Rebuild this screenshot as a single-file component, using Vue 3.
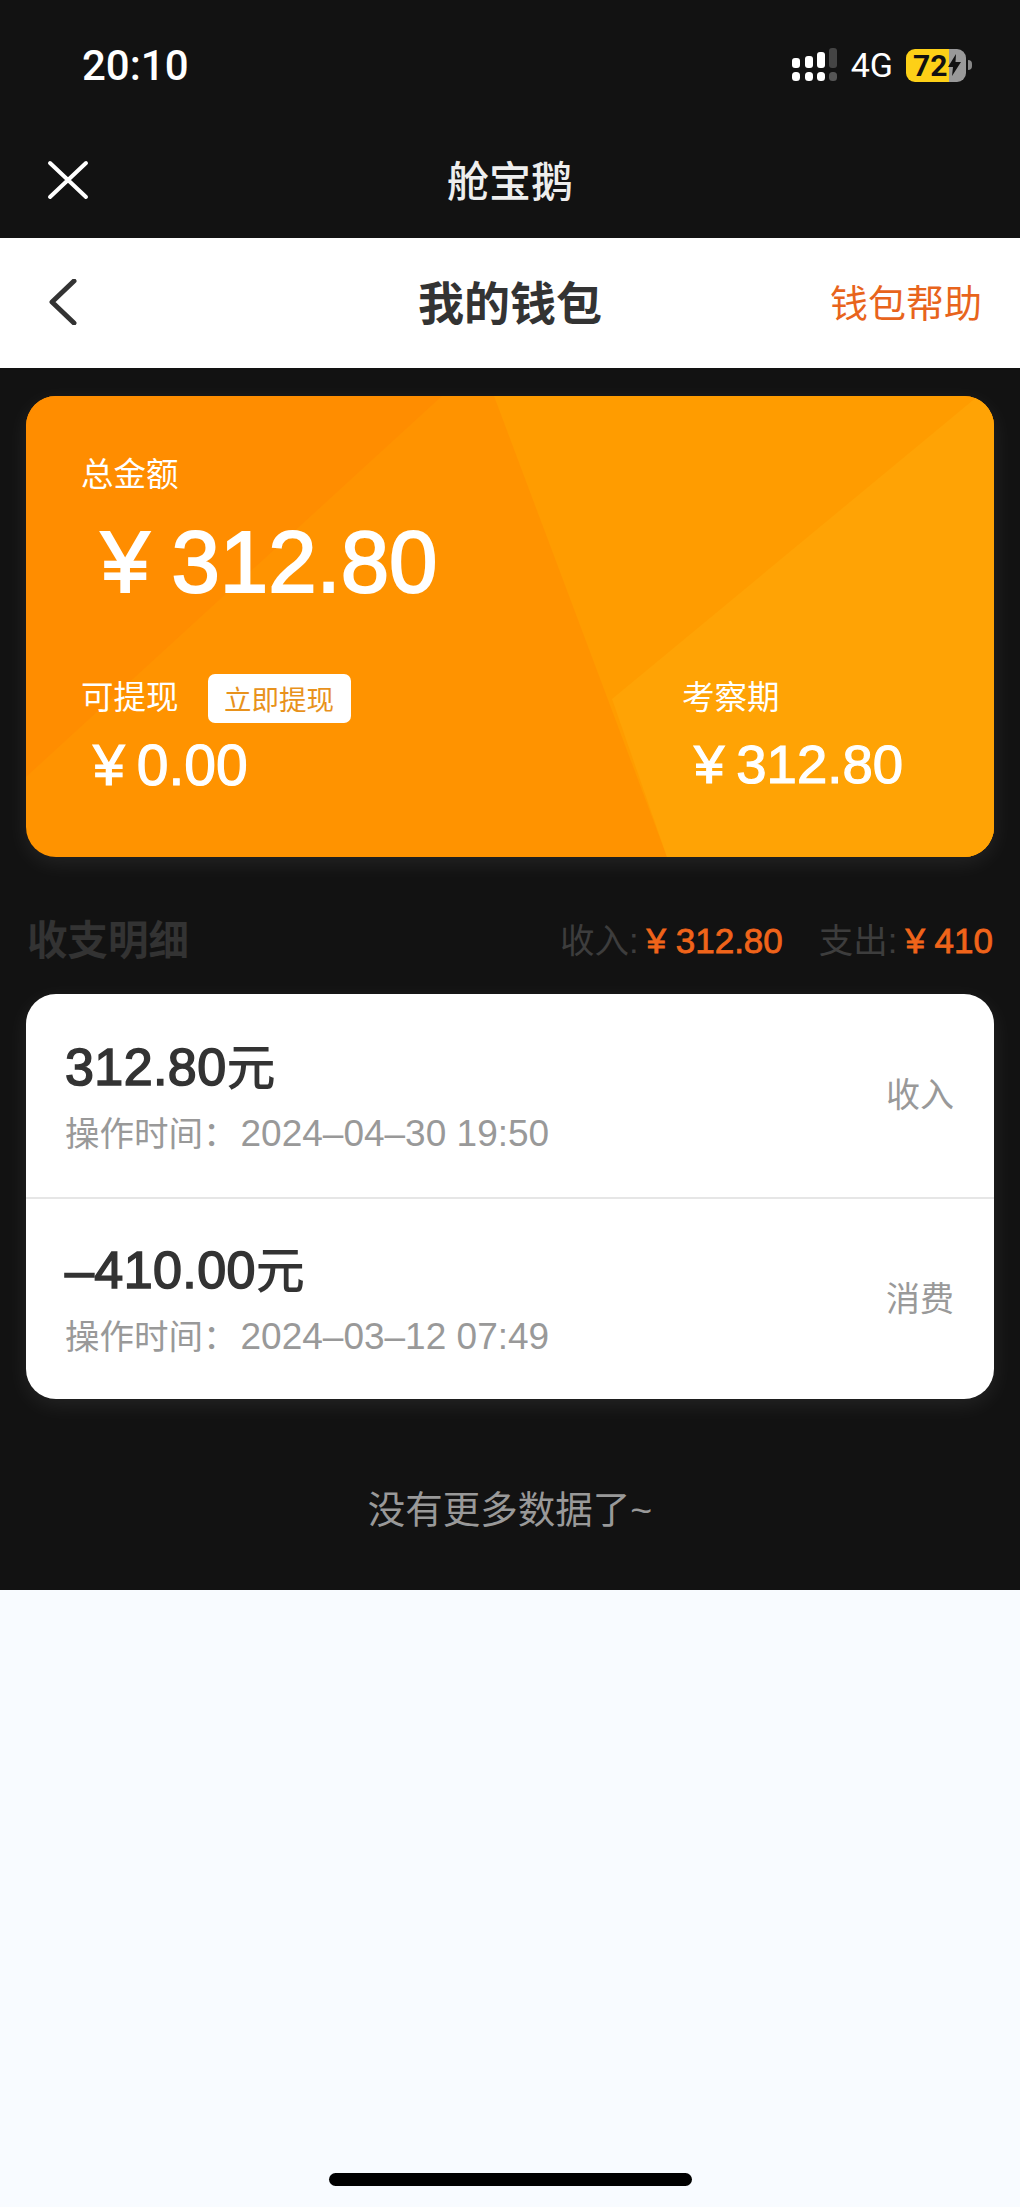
<template>
  <div class="page">
    <header class="top">
      <div class="status">
        <span class="time">20:10</span>
        <div class="status-right">
          <svg class="signal" width="46" height="34" viewBox="0 0 46 34">
            <rect x="0" y="10" width="8" height="10" rx="3" fill="#fff" />
            <rect x="13" y="8" width="8" height="12" rx="3" fill="#fff" />
            <rect x="25" y="4" width="8" height="16" rx="3" fill="#fff" />
            <rect x="37" y="0" width="8" height="20" rx="3" fill="#444" />
            <rect x="0" y="24" width="8" height="9" rx="3.5" fill="#fff" />
            <rect x="13" y="24" width="8" height="9" rx="3.5" fill="#fff" />
            <rect x="25" y="24" width="8" height="9" rx="3.5" fill="#fff" />
            <rect x="37" y="24" width="8" height="9" rx="3.5" fill="#555" />
          </svg>
          <span class="net">4G</span>
          <div class="battery">
            <span class="level">72</span>
            <svg class="bolt" width="13" height="22" viewBox="0 0 13 22">
              <path d="M8 0 0 13h5l-1 9 9-14H7.5z" fill="#111" />
            </svg>
          </div>
          <i class="battery-nub"></i>
        </div>
      </div>
      <div class="app-bar">
        <svg class="close" width="42" height="40" viewBox="0 0 42 40">
          <path d="M3 3 39 37M39 3 3 37" stroke="#fff" stroke-width="4" stroke-linecap="round" fill="none" />
        </svg>
        <span class="app-name">舱宝鹅</span>
      </div>
    </header>

    <nav class="nav">
      <svg class="back" width="30" height="46" viewBox="0 0 30 46">
        <path d="M26 2 4 23l22 21" stroke="#333" stroke-width="5" stroke-linecap="round" stroke-linejoin="round" fill="none" />
      </svg>
      <h1 class="nav-title">我的钱包</h1>
      <a class="nav-help">钱包帮助</a>
    </nav>

    <main class="content">
      <section class="wallet">
        <svg class="wallet-bg" viewBox="0 0 968 461" preserveAspectRatio="none">
          <rect width="968" height="461" fill="#ff9300" />
          <polygon points="0,0 416,0 0,381" fill="#ff8d00" />
          <polygon points="468,0 968,0 968,461 641,461" fill="#ff9c00" />
          <polygon points="952,0 968,0 968,461 641,461 586,303" fill="#ffa305" />
        </svg>
        <div class="wallet-body">
          <p class="label">总金额</p>
          <p class="total"><span class="yen">¥</span>312.80</p>
          <div class="wallet-row">
            <div>
              <div class="label-row">
                <span class="label">可提现</span>
                <button class="withdraw">立即提现</button>
              </div>
              <p class="sub-amount big"><span class="yen-sm">¥</span>0.00</p>
            </div>
            <div>
              <div class="label-row">
                <span class="label">考察期</span>
              </div>
              <p class="sub-amount"><span class="yen-sm">¥</span>312.80</p>
            </div>
          </div>
        </div>
      </section>

      <div class="section-head">
        <h2 class="section-title">收支明细</h2>
        <div class="summary">
          <span>收入:<b class="sum-value">¥ 312.80</b></span>
          <span>支出:<b class="sum-value">¥ 410</b></span>
        </div>
      </div>

      <ul class="records">
        <li v-for="item in records" :key="item.time" class="record">
          <div class="record-main">
            <p class="record-amount">{{ item.amount }}<span class="unit">元</span></p>
            <p class="record-time"><span class="time-label">操作时间&#xFF1A;</span><span class="date">{{ item.time }}</span></p>
          </div>
          <span class="record-type">{{ item.type }}</span>
        </li>
      </ul>

      <p class="no-more">没有更多数据了~</p>
    </main>

    <div class="home-bar"><i></i></div>
  </div>
</template>

<script setup>
const records = [
  { amount: "312.80", time: "2024–04–30 19:50", type: "收入" },
  { amount: "–410.00", time: "2024–03–12 07:49", type: "消费" },
];
</script>

<style>
html,
body {
  margin: 0;
  background: #f8fbff;
}
</style>

<style scoped>
.page {
  display: flex;
  flex-direction: column;
  min-height: 100vh;
  background: #f8fbff;
  font-family: "Liberation Sans", "Noto Sans CJK SC", sans-serif;
  color: #333;
}

p,
h1,
h2,
ul {
  margin: 0;
  padding: 0;
}

.top {
  background: #121212;
  color: #fff;
}

.status {
  display: flex;
  align-items: center;
  justify-content: space-between;
  height: 130px;
  padding: 0 48px 0 82px;
}

.time {
  font-family: Roboto, sans-serif;
  font-size: 42px;
  font-weight: 500;
}

.status-right {
  display: flex;
  align-items: center;
}

.signal {
  display: block;
}

.net {
  margin: 0 13px;
  font-family: Roboto, sans-serif;
  font-size: 34px;
}

.battery {
  display: flex;
  align-items: center;
  width: 60px;
  height: 33px;
  padding-left: 7px;
  box-sizing: border-box;
  border-radius: 9px;
  background: linear-gradient(90deg, #fdd017 43px, #999 43px);
}

.level {
  font-family: Roboto, sans-serif;
  font-size: 30px;
  font-weight: 700;
  line-height: 33px;
  color: #111;
}

.bolt {
  margin-left: 1px;
}

.battery-nub {
  width: 4px;
  height: 10px;
  margin-left: 2px;
  border-radius: 0 4px 4px 0;
  background: #888;
}

.app-bar {
  position: relative;
  display: flex;
  align-items: center;
  justify-content: center;
  height: 108px;
  padding-bottom: 12px;
  box-sizing: border-box;
}

.close {
  position: absolute;
  left: 47px;
  top: 30px;
}

.app-name {
  font-size: 42px;
  font-weight: 500;
  color: #eee;
}

.nav {
  display: grid;
  grid-template-columns: 1fr auto 1fr;
  align-items: center;
  height: 130px;
  padding: 0 38px 6px;
  box-sizing: border-box;
  background: #fff;
}

.back {
  display: block;
  margin: 4px 0 0 10px;
}

.nav-title {
  font-size: 46px;
  font-weight: 700;
  color: #333;
}

.nav-help {
  justify-self: end;
  font-size: 38px;
  color: #e8641c;
}

.content {
  padding: 28px 26px 0 26px;
  height: 1222px;
  box-sizing: border-box;
  background: #121212;
}

.wallet {
  position: relative;
  overflow: hidden;
  height: 461px;
  border-radius: 30px;
  box-shadow: 0 6px 22px rgba(255, 255, 255, 0.08);
}

.wallet-bg {
  position: absolute;
  inset: 0;
  width: 100%;
  height: 100%;
}

.wallet-body {
  position: relative;
  padding: 56px 0 0 55px;
  color: #fff;
}

.label {
  font-size: 32.5px;
  line-height: 46px;
  color: #fff;
}

.total {
  margin: 14px 0 0 20px;
  font-size: 87px;
  line-height: 100px;
  -webkit-text-stroke: 2px currentColor;
}

.yen {
  margin-right: 22px;
}

.wallet-row {
  display: grid;
  grid-template-columns: 1fr 312px;
  margin-top: 61px;
}

.label-row {
  display: flex;
  align-items: center;
  height: 50px;
}

.withdraw {
  margin-left: 29px;
  width: 143px;
  height: 49px;
  padding: 0;
  border: none;
  border-radius: 7px;
  background: #fff;
  font-family: inherit;
  font-size: 27.5px;
  color: #e8921c;
}

.sub-amount {
  margin: 10px 0 0 12px;
  font-size: 54.5px;
  line-height: 64px;
  -webkit-text-stroke: 1.2px currentColor;
}

.sub-amount.big {
  font-size: 57px;
}

.yen-sm {
  margin-right: 12px;
}

.section-head {
  display: flex;
  align-items: center;
  justify-content: space-between;
  height: 137px;
  padding: 24px 1px 0 1px;
  box-sizing: border-box;
}

.section-title {
  font-size: 40.5px;
  font-weight: 700;
  color: #333;
}

.summary {
  display: flex;
  gap: 36px;
  font-size: 34.5px;
  color: #3d3d3d;
}

.sum-value {
  margin-left: 8px;
  font-size: 35px;
  font-weight: 400;
  color: #f0641a;
  -webkit-text-stroke: 0.8px currentColor;
}

.records {
  list-style: none;
  overflow: hidden;
  border-radius: 30px;
  background: #fff;
  box-shadow: 0 6px 22px rgba(255, 255, 255, 0.08);
}

.record {
  display: flex;
  align-items: center;
  justify-content: space-between;
  height: 202px;
  padding: 0 40px 0 39px;
  box-sizing: border-box;
  border-top: 2px solid #e6e6e6;
}

.record:first-child {
  height: 203px;
  border-top: none;
}

.record-main {
  padding-bottom: 5px;
}

.record-amount {
  font-size: 52px;
  line-height: 66px;
  letter-spacing: 0.4px;
  color: #333;
  -webkit-text-stroke: 1.6px currentColor;
}

.unit {
  font-size: 49px;
  font-family: "Noto Sans CJK SC", sans-serif;
  -webkit-text-stroke: 0;
  font-weight: 500;
}

.record-time {
  margin-top: 9px;
  font-size: 34.5px;
  line-height: 44px;
  color: #999;
}

.time-label {
  font-family: "Noto Sans CJK SC", sans-serif;
}

.date {
  margin-left: 3px;
  font-size: 37px;
}

.record-type {
  margin-bottom: 6px;
  font-size: 34px;
  color: #999;
}

.no-more {
  margin-top: 88px;
  text-align: center;
  font-size: 37.5px;
  line-height: 46px;
  color: #999;
}

.home-bar {
  flex: 1;
  display: flex;
  align-items: flex-end;
  justify-content: center;
  padding-bottom: 21px;
}

.home-bar i {
  width: 363px;
  height: 13px;
  border-radius: 7px;
  background: #000;
}
</style>
